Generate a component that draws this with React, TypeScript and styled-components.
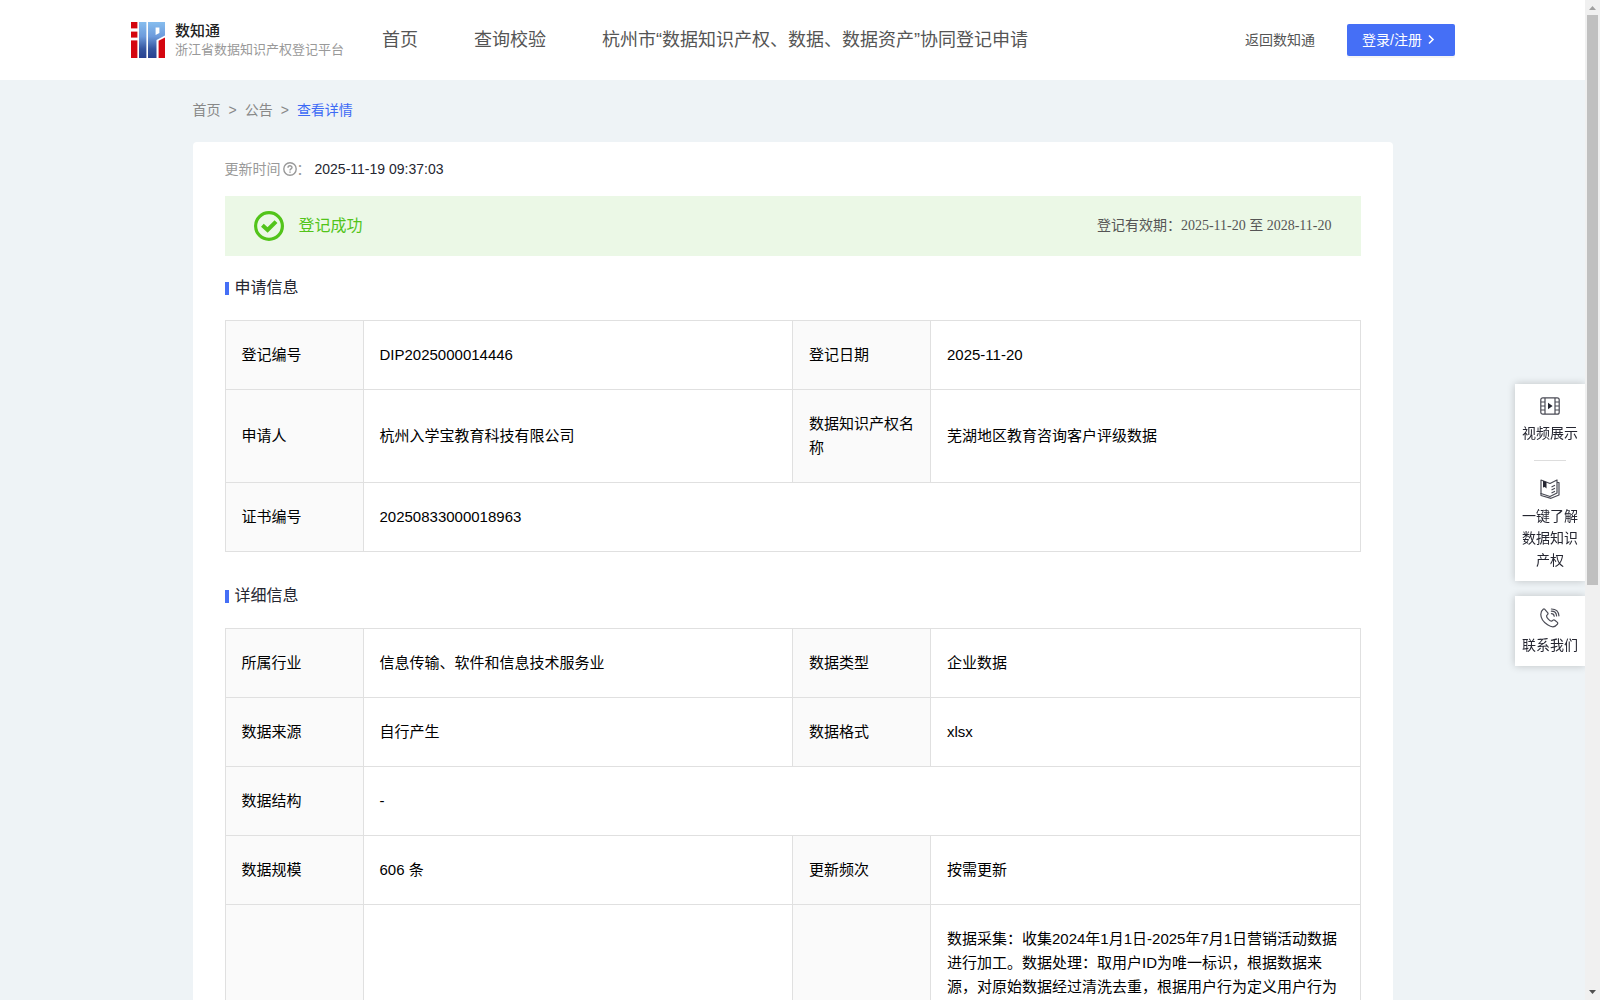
import React from "react";
import styled, { createGlobalStyle } from "styled-components";

const sans = `"Liberation Sans", "Noto Sans CJK SC", sans-serif`;
const serif = `"Liberation Serif", "Noto Sans CJK SC", serif`;

const GlobalStyle = createGlobalStyle`
  * { box-sizing: border-box; }
  body {
    margin: 0;
    background: #eef3f6;
    font-family: ${sans};
    font-size: 14px;
    line-height: 22px;
    color: #252631;
  }
  a { color: inherit; text-decoration: none; }
`;

const Shell = styled.div`
  display: grid;
  grid-template-columns: minmax(0, 1fr) 15px;
  height: 100vh;
  overflow: hidden;
`;

const Page = styled.div`
  height: 100vh;
  overflow: hidden;
`;

const Header = styled.header`
  display: flex;
  align-items: center;
  height: 80px;
  padding: 0 130px;
  background: #fff;
`;

const Brand = styled.a`
  display: flex;
  align-items: center;
  gap: 10px;
  width: 252px;
  flex: none;
`;

const BrandText = styled.span`
  display: flex;
  flex-direction: column;
  white-space: nowrap;
`;

const BrandName = styled.strong`
  font-size: 15px;
  line-height: 20px;
  font-weight: 500;
  color: #222;
`;

const BrandSub = styled.span`
  font-size: 13px;
  line-height: 18px;
  color: #999;
`;

const Nav = styled.nav`
  display: flex;
  flex: 1;
  gap: 56px;
  font-size: 18px;
  line-height: 28px;
  color: #555;
  white-space: nowrap;
`;

const Actions = styled.div`
  display: flex;
  align-items: center;
  gap: 32px;
  color: #555;
  white-space: nowrap;
`;

const LoginButton = styled.button`
  display: flex;
  align-items: center;
  gap: 4px;
  width: 108px;
  height: 32px;
  padding: 0 15px;
  border: 0;
  border-radius: 2px;
  background: #456ff6;
  box-shadow: 0 2px 0 rgba(0, 0, 0, 0.04);
  color: #fff;
  font: 14px/22px ${sans};
`;

const Container = styled.main`
  max-width: 1200px;
  margin: 0 auto;
`;

const Breadcrumb = styled.nav`
  display: flex;
  gap: 8px;
  padding: 19px 0 21px;
  color: #888;
`;

const Current = styled.span`
  color: #3d6af5;
`;

const Card = styled.section`
  padding: 16px 32px 32px;
  border-radius: 4px;
  background: #fff;
`;

const UpdateRow = styled.div`
  display: flex;
  align-items: center;
  color: #999;
  margin-bottom: 16px;
`;

const UpdateTime = styled.time`
  margin-left: 4px;
  color: #252631;
`;

const Banner = styled.div`
  display: flex;
  align-items: center;
  gap: 15px;
  height: 60px;
  padding: 0 29px;
  background: #ebf8e6;
`;

const BannerStatus = styled.strong`
  flex: 1;
  font-size: 16px;
  line-height: 24px;
  font-weight: 400;
  color: #52c41a;
`;

const Validity = styled.span`
  font-family: ${serif};
  color: #555;
`;

const SectionTitle = styled.h2`
  display: flex;
  align-items: center;
  gap: 6px;
  margin: ${(p: { $first?: boolean }) => (p.$first ? "20px" : "32px")} 0 20px;
  font-size: 16px;
  line-height: 24px;
  font-weight: 400;
  color: #252631;

  &::before {
    content: "";
    width: 4px;
    height: 13px;
    background: #456ff6;
  }
`;

const InfoTable = styled.table`
  width: 100%;
  table-layout: fixed;
  border-collapse: collapse;
  font-size: 15px;
  line-height: 24px;
  color: #000;
`;

const LabelCol = styled.col`
  width: 138px;
`;

const Label = styled.th`
  padding: 22px 15px 22px 16px;
  border: 1px solid #e0e0e0;
  background: #fafafa;
  font-weight: 400;
  text-align: left;
`;

const Value = styled.td`
  padding: 22px 15px 22px 16px;
  border: 1px solid #e0e0e0;
`;

const LongValue = styled(Value)`
  height: 440px;
  vertical-align: top;
`;

const FloatBar = styled.aside`
  position: fixed;
  top: 384px;
  right: 15px;
  display: flex;
  flex-direction: column;
  gap: 15px;
  width: 70px;
`;

const FloatCard = styled.div`
  display: flex;
  flex-direction: column;
  align-items: center;
  background: #fff;
  box-shadow: 0 0 8px rgba(0, 0, 0, 0.2);
  clip-path: inset(-12px 0 -12px -12px);
`;

const FloatLink = styled.a`
  display: flex;
  flex-direction: column;
  align-items: center;
  gap: 6px;
  width: 100%;
  padding: 12px 7px 10px;
  text-align: center;
`;

const FloatDivider = styled.hr`
  width: 32px;
  height: 1px;
  margin: 6px 0;
  border: 0;
  background: #ddd;
`;

const ScrollTrack = styled.div`
  display: flex;
  flex-direction: column;
  align-items: center;
  padding: 6px 0;
  background: #f0f0f0;
`;

const ScrollThumb = styled.div`
  width: 11px;
  height: 57vh;
  margin: 5px 0 auto;
  background: #c0c0c0;
`;

const Logo = () => (
  <svg width="35" height="36" viewBox="0 0 35 36" aria-hidden="true">
    <defs>
      <linearGradient id="blue" x1="0" y1="0" x2="0" y2="1">
        <stop offset="0" stopColor="#86bdee" />
        <stop offset="0.4" stopColor="#6d9bdc" />
        <stop offset="0.75" stopColor="#34559f" />
        <stop offset="1" stopColor="#28408f" />
      </linearGradient>
    </defs>
    <rect x="1" y="0" width="6.4" height="6.4" fill="#d40610" />
    <rect x="1" y="9.6" width="6.4" height="6" fill="#d40610" />
    <rect x="1" y="18.4" width="6.4" height="17.6" fill="#d40610" />
    <rect x="9" y="0" width="7.4" height="36" fill="url(#blue)" />
    <path d="M18 0H35V13.4L26.5 18V36H18ZM25.6 5.6V13L29.4 11V5.6Z" fillRule="evenodd" fill="url(#blue)" />
    <path d="M28.6 18.8L35 15.6V36H28.6Z" fill="#d40610" />
  </svg>
);

const ChevronIcon = () => (
  <svg width="14" height="12" viewBox="0 0 14 12" fill="none" stroke="currentColor" strokeWidth="1.6" aria-hidden="true">
    <path d="M3 1.5L7 5.5L3 9.5" />
  </svg>
);

const QuestionIcon = () => (
  <svg width="16" height="14" viewBox="0 0 16 14" fill="none" stroke="#999" strokeWidth="1.4" aria-hidden="true">
    <circle cx="9" cy="7" r="6.2" />
    <path d="M7 5.7C7 3.2 11 3.2 11 5.6C11 7 9 6.9 9 8.4" />
    <path d="M9 9.4V10.8" />
  </svg>
);

const CheckIcon = () => (
  <svg width="30" height="30" viewBox="0 0 30 30" fill="none" stroke="#52c41a" aria-hidden="true">
    <circle cx="15" cy="15" r="13.4" strokeWidth="3.2" />
    <path d="M8.4 14.2L13.6 19L22 10.6" strokeWidth="4" />
  </svg>
);

const VideoIcon = () => (
  <svg width="20" height="20" viewBox="0 0 20 20" fill="none" stroke="#4a4b55" strokeWidth="1.2" aria-hidden="true">
    <rect x="0.8" y="1.8" width="18.4" height="16.4" rx="2" />
    <path d="M5 2V18M15 2V18M1 6H5M1 10H5M1 14H5M15 6H19M15 10H19M15 14H19" />
    <path d="M8 6.8L12.6 10L8 13.2Z" fill="#252631" stroke="none" />
  </svg>
);

const BookIcon = () => (
  <svg width="20" height="20" viewBox="0 0 20 20" fill="none" stroke="#4a4b55" strokeWidth="1.2" strokeLinejoin="round" aria-hidden="true">
    <path d="M1 1L10 4.5L17 1V14L10 17.5L1 14.5Z" />
    <path d="M17 3.5H19V16L11 19.3L1 16.5V14" />
    <path d="M11.5 8L15 6.2M11.5 11L15 9.2M11.5 14L15 12.2" />
    <path d="M3 1.8L6.5 3V9.5L4.8 8L3 8.5Z" fill="#252631" stroke="none" />
  </svg>
);

const PhoneIcon = () => (
  <svg width="20" height="20" viewBox="0 0 20 20" fill="none" stroke="#4a4b55" strokeWidth="1.2" strokeLinejoin="round" strokeLinecap="round" aria-hidden="true">
    <path d="M4.6 1.2L7.8 4.8C8.4 5.6 7.8 6.6 6.6 7.6C6.2 9.4 9.8 13.4 11.8 13.2C12.8 12 14 11.6 14.8 12.2L17.4 14.4C18 15 17.8 15.6 17.2 16.4C14.8 19.6 11.4 19.4 7.6 16.8C3.6 14 0.8 9.8 0.8 6.4C0.8 4 1.8 2.2 3.2 1.2C3.8 0.8 4.2 0.8 4.6 1.2Z" />
    <path d="M11.4 5.6C13 5.6 14 6.6 14.2 8.2M11.4 3.2C14.4 3.2 16.4 5.2 16.6 8M11.4 1C15.8 1 18.6 3.8 18.9 7.8" />
  </svg>
);

const UpArrow = () => (
  <svg width="7" height="4" viewBox="0 0 7 4" aria-hidden="true">
    <path d="M0 4L3.5 0L7 4Z" fill="#a0a0a0" />
  </svg>
);

const DownArrow = () => (
  <svg width="7" height="4" viewBox="0 0 7 4" aria-hidden="true">
    <path d="M0 0L3.5 4L7 0Z" fill="#505050" />
  </svg>
);

type Row = [string, string, string?, string?];

const applyRows: Row[] = [
  ["登记编号", "DIP2025000014446", "登记日期", "2025-11-20"],
  ["申请人", "杭州入学宝教育科技有限公司", "数据知识产权名称", "芜湖地区教育咨询客户评级数据"],
  ["证书编号", "20250833000018963"],
];

const detailRows: Row[] = [
  ["所属行业", "信息传输、软件和信息技术服务业", "数据类型", "企业数据"],
  ["数据来源", "自行产生", "数据格式", "xlsx"],
  ["数据结构", "-"],
  ["数据规模", "606 条", "更新频次", "按需更新"],
];

const processing =
  "数据采集：收集2024年1月1日-2025年7月1日营销活动数据进行加工。数据处理：取用户ID为唯一标识，根据数据来源，对原始数据经过清洗去重，根据用户行为定义用户行为";

function Info({ rows, children }: { rows: Row[]; children?: React.ReactNode }) {
  return (
    <InfoTable>
      <colgroup>
        <LabelCol />
        <col />
        <LabelCol />
        <col />
      </colgroup>
      <tbody>
        {rows.map(([label, value, label2, value2]) => (
          <tr key={label}>
            <Label scope="row">{label}</Label>
            <Value colSpan={label2 ? 1 : 3}>{value}</Value>
            {label2 && <Label scope="row">{label2}</Label>}
            {label2 && <Value>{value2}</Value>}
          </tr>
        ))}
        {children}
      </tbody>
    </InfoTable>
  );
}

export default function App() {
  return (
    <Shell>
      <GlobalStyle />
      <Page>
        <Header>
          <Brand href="#">
            <Logo />
            <BrandText>
              <BrandName>数知通</BrandName>
              <BrandSub>浙江省数据知识产权登记平台</BrandSub>
            </BrandText>
          </Brand>
          <Nav>
            <a href="#">首页</a>
            <a href="#">查询校验</a>
            <a href="#">杭州市“数据知识产权、数据、数据资产”协同登记申请</a>
          </Nav>
          <Actions>
            <a href="#">返回数知通</a>
            <LoginButton type="button">
              登录/注册
              <ChevronIcon />
            </LoginButton>
          </Actions>
        </Header>
        <Container>
          <Breadcrumb>
            <a href="#">首页</a>
            <span>&gt;</span>
            <a href="#">公告</a>
            <span>&gt;</span>
            <Current>查看详情</Current>
          </Breadcrumb>
          <Card>
            <UpdateRow>
              更新时间
              <QuestionIcon />
              ：
              <UpdateTime>2025-11-19 09:37:03</UpdateTime>
            </UpdateRow>
            <Banner>
              <CheckIcon />
              <BannerStatus>登记成功</BannerStatus>
              <Validity>登记有效期：2025-11-20 至 2028-11-20</Validity>
            </Banner>
            <SectionTitle $first>申请信息</SectionTitle>
            <Info rows={applyRows} />
            <SectionTitle>详细信息</SectionTitle>
            <Info rows={detailRows}>
              <tr>
                <Label />
                <Value />
                <Label />
                <LongValue>{processing}</LongValue>
              </tr>
            </Info>
          </Card>
        </Container>
      </Page>
      <ScrollTrack>
        <UpArrow />
        <ScrollThumb />
        <DownArrow />
      </ScrollTrack>
      <FloatBar>
        <FloatCard>
          <FloatLink href="#">
            <VideoIcon />
            视频展示
          </FloatLink>
          <FloatDivider />
          <FloatLink href="#">
            <BookIcon />
            一键了解数据知识产权
          </FloatLink>
        </FloatCard>
        <FloatCard>
          <FloatLink href="#">
            <PhoneIcon />
            联系我们
          </FloatLink>
        </FloatCard>
      </FloatBar>
    </Shell>
  );
}
